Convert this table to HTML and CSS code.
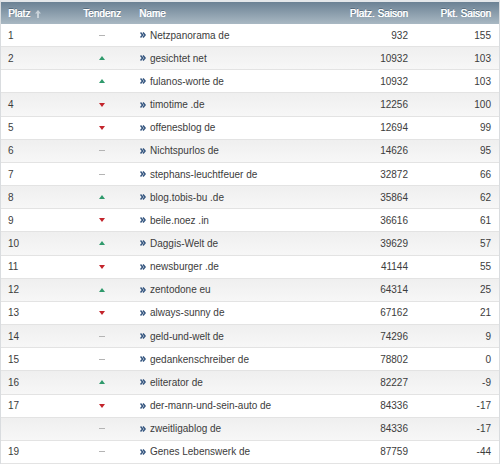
FILE: index.html
```html
<!DOCTYPE html>
<html lang="de">
<head>
<meta charset="utf-8">
<title>Rangliste</title>
<link rel="stylesheet" href="styles.css">
</head>
<body>
<div class="board">
  <div class="row head">
    <div class="c-platz">Platz <svg class="sort" width="6" height="8" viewBox="0 0 6 8"><path d="M3 0 L6 3.5 H4 V8 H2 V3.5 H0 Z" fill="#c9d2d9"/></svg></div>
    <div class="c-trend">Tendenz</div>
    <div class="c-name">Name</div>
    <div class="c-num">Platz. Saison</div>
    <div class="c-pkt">Pkt. Saison</div>
  </div>

  <div class="row"><div class="c-platz">1</div><div class="c-trend"><span class="t-same"></span></div><div class="c-name"><svg class="go" width="6" height="6" viewBox="0 0 6 6"><path d="M0.5 0.5 L2.6 3 L0.5 5.5 M3 0.5 L5.1 3 L3 5.5" fill="none" stroke="#34557f" stroke-width="1.5"/></svg>Netzpanorama de</div><div class="c-num">932</div><div class="c-pkt">155</div></div>
  <div class="row alt"><div class="c-platz">2</div><div class="c-trend"><span class="t-up"></span></div><div class="c-name"><svg class="go" width="6" height="6" viewBox="0 0 6 6"><path d="M0.5 0.5 L2.6 3 L0.5 5.5 M3 0.5 L5.1 3 L3 5.5" fill="none" stroke="#34557f" stroke-width="1.5"/></svg>gesichtet net</div><div class="c-num">10932</div><div class="c-pkt">103</div></div>
  <div class="row"><div class="c-platz"></div><div class="c-trend"><span class="t-up"></span></div><div class="c-name"><svg class="go" width="6" height="6" viewBox="0 0 6 6"><path d="M0.5 0.5 L2.6 3 L0.5 5.5 M3 0.5 L5.1 3 L3 5.5" fill="none" stroke="#34557f" stroke-width="1.5"/></svg>fulanos-worte de</div><div class="c-num">10932</div><div class="c-pkt">103</div></div>
  <div class="row alt"><div class="c-platz">4</div><div class="c-trend"><span class="t-down"></span></div><div class="c-name"><svg class="go" width="6" height="6" viewBox="0 0 6 6"><path d="M0.5 0.5 L2.6 3 L0.5 5.5 M3 0.5 L5.1 3 L3 5.5" fill="none" stroke="#34557f" stroke-width="1.5"/></svg>timotime .de</div><div class="c-num">12256</div><div class="c-pkt">100</div></div>
  <div class="row"><div class="c-platz">5</div><div class="c-trend"><span class="t-down"></span></div><div class="c-name"><svg class="go" width="6" height="6" viewBox="0 0 6 6"><path d="M0.5 0.5 L2.6 3 L0.5 5.5 M3 0.5 L5.1 3 L3 5.5" fill="none" stroke="#34557f" stroke-width="1.5"/></svg>offenesblog de</div><div class="c-num">12694</div><div class="c-pkt">99</div></div>
  <div class="row alt"><div class="c-platz">6</div><div class="c-trend"><span class="t-same"></span></div><div class="c-name"><svg class="go" width="6" height="6" viewBox="0 0 6 6"><path d="M0.5 0.5 L2.6 3 L0.5 5.5 M3 0.5 L5.1 3 L3 5.5" fill="none" stroke="#34557f" stroke-width="1.5"/></svg>Nichtspurlos de</div><div class="c-num">14626</div><div class="c-pkt">95</div></div>
  <div class="row"><div class="c-platz">7</div><div class="c-trend"><span class="t-same"></span></div><div class="c-name"><svg class="go" width="6" height="6" viewBox="0 0 6 6"><path d="M0.5 0.5 L2.6 3 L0.5 5.5 M3 0.5 L5.1 3 L3 5.5" fill="none" stroke="#34557f" stroke-width="1.5"/></svg>stephans-leuchtfeuer de</div><div class="c-num">32872</div><div class="c-pkt">66</div></div>
  <div class="row alt"><div class="c-platz">8</div><div class="c-trend"><span class="t-up"></span></div><div class="c-name"><svg class="go" width="6" height="6" viewBox="0 0 6 6"><path d="M0.5 0.5 L2.6 3 L0.5 5.5 M3 0.5 L5.1 3 L3 5.5" fill="none" stroke="#34557f" stroke-width="1.5"/></svg>blog.tobis-bu .de</div><div class="c-num">35864</div><div class="c-pkt">62</div></div>
  <div class="row"><div class="c-platz">9</div><div class="c-trend"><span class="t-down"></span></div><div class="c-name"><svg class="go" width="6" height="6" viewBox="0 0 6 6"><path d="M0.5 0.5 L2.6 3 L0.5 5.5 M3 0.5 L5.1 3 L3 5.5" fill="none" stroke="#34557f" stroke-width="1.5"/></svg>beile.noez .in</div><div class="c-num">36616</div><div class="c-pkt">61</div></div>
  <div class="row alt"><div class="c-platz">10</div><div class="c-trend"><span class="t-up"></span></div><div class="c-name"><svg class="go" width="6" height="6" viewBox="0 0 6 6"><path d="M0.5 0.5 L2.6 3 L0.5 5.5 M3 0.5 L5.1 3 L3 5.5" fill="none" stroke="#34557f" stroke-width="1.5"/></svg>Daggis-Welt de</div><div class="c-num">39629</div><div class="c-pkt">57</div></div>
  <div class="row"><div class="c-platz">11</div><div class="c-trend"><span class="t-down"></span></div><div class="c-name"><svg class="go" width="6" height="6" viewBox="0 0 6 6"><path d="M0.5 0.5 L2.6 3 L0.5 5.5 M3 0.5 L5.1 3 L3 5.5" fill="none" stroke="#34557f" stroke-width="1.5"/></svg>newsburger .de</div><div class="c-num">41144</div><div class="c-pkt">55</div></div>
  <div class="row alt"><div class="c-platz">12</div><div class="c-trend"><span class="t-up"></span></div><div class="c-name"><svg class="go" width="6" height="6" viewBox="0 0 6 6"><path d="M0.5 0.5 L2.6 3 L0.5 5.5 M3 0.5 L5.1 3 L3 5.5" fill="none" stroke="#34557f" stroke-width="1.5"/></svg>zentodone eu</div><div class="c-num">64314</div><div class="c-pkt">25</div></div>
  <div class="row"><div class="c-platz">13</div><div class="c-trend"><span class="t-down"></span></div><div class="c-name"><svg class="go" width="6" height="6" viewBox="0 0 6 6"><path d="M0.5 0.5 L2.6 3 L0.5 5.5 M3 0.5 L5.1 3 L3 5.5" fill="none" stroke="#34557f" stroke-width="1.5"/></svg>always-sunny de</div><div class="c-num">67162</div><div class="c-pkt">21</div></div>
  <div class="row alt"><div class="c-platz">14</div><div class="c-trend"><span class="t-same"></span></div><div class="c-name"><svg class="go" width="6" height="6" viewBox="0 0 6 6"><path d="M0.5 0.5 L2.6 3 L0.5 5.5 M3 0.5 L5.1 3 L3 5.5" fill="none" stroke="#34557f" stroke-width="1.5"/></svg>geld-und-welt de</div><div class="c-num">74296</div><div class="c-pkt">9</div></div>
  <div class="row"><div class="c-platz">15</div><div class="c-trend"><span class="t-same"></span></div><div class="c-name"><svg class="go" width="6" height="6" viewBox="0 0 6 6"><path d="M0.5 0.5 L2.6 3 L0.5 5.5 M3 0.5 L5.1 3 L3 5.5" fill="none" stroke="#34557f" stroke-width="1.5"/></svg>gedankenschreiber de</div><div class="c-num">78802</div><div class="c-pkt">0</div></div>
  <div class="row alt"><div class="c-platz">16</div><div class="c-trend"><span class="t-up"></span></div><div class="c-name"><svg class="go" width="6" height="6" viewBox="0 0 6 6"><path d="M0.5 0.5 L2.6 3 L0.5 5.5 M3 0.5 L5.1 3 L3 5.5" fill="none" stroke="#34557f" stroke-width="1.5"/></svg>eliterator de</div><div class="c-num">82227</div><div class="c-pkt">-9</div></div>
  <div class="row"><div class="c-platz">17</div><div class="c-trend"><span class="t-down"></span></div><div class="c-name"><svg class="go" width="6" height="6" viewBox="0 0 6 6"><path d="M0.5 0.5 L2.6 3 L0.5 5.5 M3 0.5 L5.1 3 L3 5.5" fill="none" stroke="#34557f" stroke-width="1.5"/></svg>der-mann-und-sein-auto de</div><div class="c-num">84336</div><div class="c-pkt">-17</div></div>
  <div class="row alt"><div class="c-platz"></div><div class="c-trend"><span class="t-same"></span></div><div class="c-name"><svg class="go" width="6" height="6" viewBox="0 0 6 6"><path d="M0.5 0.5 L2.6 3 L0.5 5.5 M3 0.5 L5.1 3 L3 5.5" fill="none" stroke="#34557f" stroke-width="1.5"/></svg>zweitligablog de</div><div class="c-num">84336</div><div class="c-pkt">-17</div></div>
  <div class="row"><div class="c-platz">19</div><div class="c-trend"><span class="t-same"></span></div><div class="c-name"><svg class="go" width="6" height="6" viewBox="0 0 6 6"><path d="M0.5 0.5 L2.6 3 L0.5 5.5 M3 0.5 L5.1 3 L3 5.5" fill="none" stroke="#34557f" stroke-width="1.5"/></svg>Genes Lebenswerk de</div><div class="c-num">87759</div><div class="c-pkt">-44</div></div>
</div>
</body>
</html>
```
FILE: styles.css
```css
html, body {
  margin: 0;
  padding: 0;
  background: #ffffff;
}
body {
  font-family: "Liberation Sans", Arial, sans-serif;
  font-size: 10px;
  color: #3c3c3c;
}
.board {
  width: 500px;
  box-sizing: border-box;
  border-left: 1px solid #d9dcdf;
  border-right: 1px solid #d9dcdf;
  border-top: 2px solid #e4e7ea;
}
.row {
  display: grid;
  grid-template-columns: 65px 72px 162px 114px 85px;
  height: 23.17px;
  box-sizing: border-box;
  border-bottom: 1px solid #e3e3e3;
  align-items: center;
  background: #ffffff;
}
.row.alt {
  background: linear-gradient(#efefef, #f7f7f7);
}
.row.head {
  height: 22px;
  border-bottom: 0;
  background: linear-gradient(#6b8194, #a9b8c3);
  color: #ffffff;
  text-shadow: 0.4px 0 0 #ffffff, 0 -1px 0 rgba(40, 60, 80, 0.5);
  font-size: 10px;
  padding-top: 1px;
}
.c-platz {
  padding-left: 7px;
  display: flex;
  align-items: center;
  gap: 5px;
}
.c-trend {
  display: flex;
  justify-content: center;
  align-items: center;
}
.c-name {
  padding-left: 2px;
  display: flex;
  align-items: center;
  gap: 4px;
  white-space: nowrap;
}
.head .c-name { padding-left: 1px; }
.c-num {
  text-align: right;
  padding-right: 6px;
}
.c-pkt {
  text-align: right;
  padding-right: 8px;
}
.sort { display: block; }
.go { display: block; flex: none; }
.t-same {
  display: block;
  width: 6px;
  height: 1px;
  background: #b4b4b4;
}
.t-up {
  display: block;
  width: 0;
  height: 0;
  border-left: 3.5px solid transparent;
  border-right: 3.5px solid transparent;
  border-bottom: 4px solid #2f9a6c;
}
.t-down {
  display: block;
  width: 0;
  height: 0;
  border-left: 3.5px solid transparent;
  border-right: 3.5px solid transparent;
  border-top: 4px solid #c3242b;
}
```
